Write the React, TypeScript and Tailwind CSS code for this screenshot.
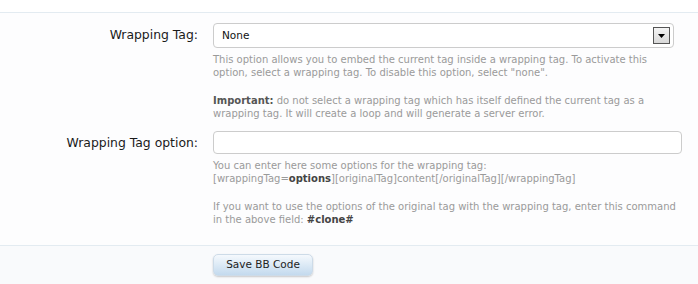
import React from 'react';

const font = { fontFamily: 'Tahoma, "DejaVu Sans", sans-serif' };

const Row: React.FC<{ label: string; children: React.ReactNode }> = ({ label, children }) => (
  <div className="flex">
    <div className="w-[213px] shrink-0 pr-[15px] pt-[4px] text-right text-[12.4px] leading-[16px] text-[#1a1a1a]">
      {label}
    </div>
    <div className="flex-1">{children}</div>
  </div>
);

const Help: React.FC<{ gap?: boolean; children: React.ReactNode }> = ({ gap, children }) => (
  <p className={gap ? 'mt-[2px] text-[10px] leading-[13px] text-[#9a9a9a]' : 'mt-[5px] text-[10px] leading-[13px] text-[#9a9a9a]'}>
    {gap && <span className="block h-[13px]" />}
    {children}
  </p>
);

export default function App() {
  return (
    <div className="w-[698px] h-[284px] overflow-hidden bg-white" style={font}>
      <div className="h-[13px] border-b border-[#e3ebf1]" />
      <div className="bg-[#fdfdfe] pt-[10px] pb-[19px] flex flex-col gap-[11px]">
        <Row label="Wrapping Tag:">
          <div className="w-[461px] h-[25px] rounded-[4px] border border-[#ccc] bg-white flex items-center pl-[8px] pr-[3px]">
            <span className="flex-1 text-[10.5px] text-[#111]">None</span>
            <span className="w-[17px] h-[17px] border border-[#555] bg-gradient-to-b from-[#f4f4f4] to-[#d8d8d8] flex items-center justify-center">
              <svg width="7" height="4" viewBox="0 0 7 4">
                <path d="M0 0h7L3.5 4z" fill="#000" />
              </svg>
            </span>
          </div>
          <Help>
            This option allows you to embed the current tag inside a wrapping tag. To activate this
            <br />
            option, select a wrapping tag. To disable this option, select "none".
          </Help>
          <Help gap>
            <b className="text-[#555]">Important:</b> do not select a wrapping tag which has itself defined the current tag as a
            <br />
            wrapping tag. It will create a loop and will generate a server error.
          </Help>
        </Row>
        <Row label="Wrapping Tag option:">
          <div className="w-[469px] h-[23px] rounded-[4px] border border-[#ccc] bg-white" />
          <Help>
            You can enter here some options for the wrapping tag:
            <br />
            [wrappingTag=<b className="text-[#444]">options</b>][originalTag]content[/originalTag][/wrappingTag]
          </Help>
          <Help gap>
            If you want to use the options of the original tag with the wrapping tag, enter this command
            <br />
            in the above field: <b className="text-[#444]">#clone#</b>
          </Help>
        </Row>
      </div>
      <div className="border-t border-[#e3ebf1] bg-[#f9fafc] h-[40px] pl-[213px] pt-[5px]">
        <button
          type="button"
          className="w-[100px] h-[22px] rounded-[5px] border border-[#cddbe8] bg-gradient-to-b from-[#f5f9fd] to-[#c3daee] text-[10.5px] text-[#222] shadow-[0_1px_2px_rgba(0,0,0,0.2)]"
        >
          Save BB Code
        </button>
      </div>
    </div>
  );
}
